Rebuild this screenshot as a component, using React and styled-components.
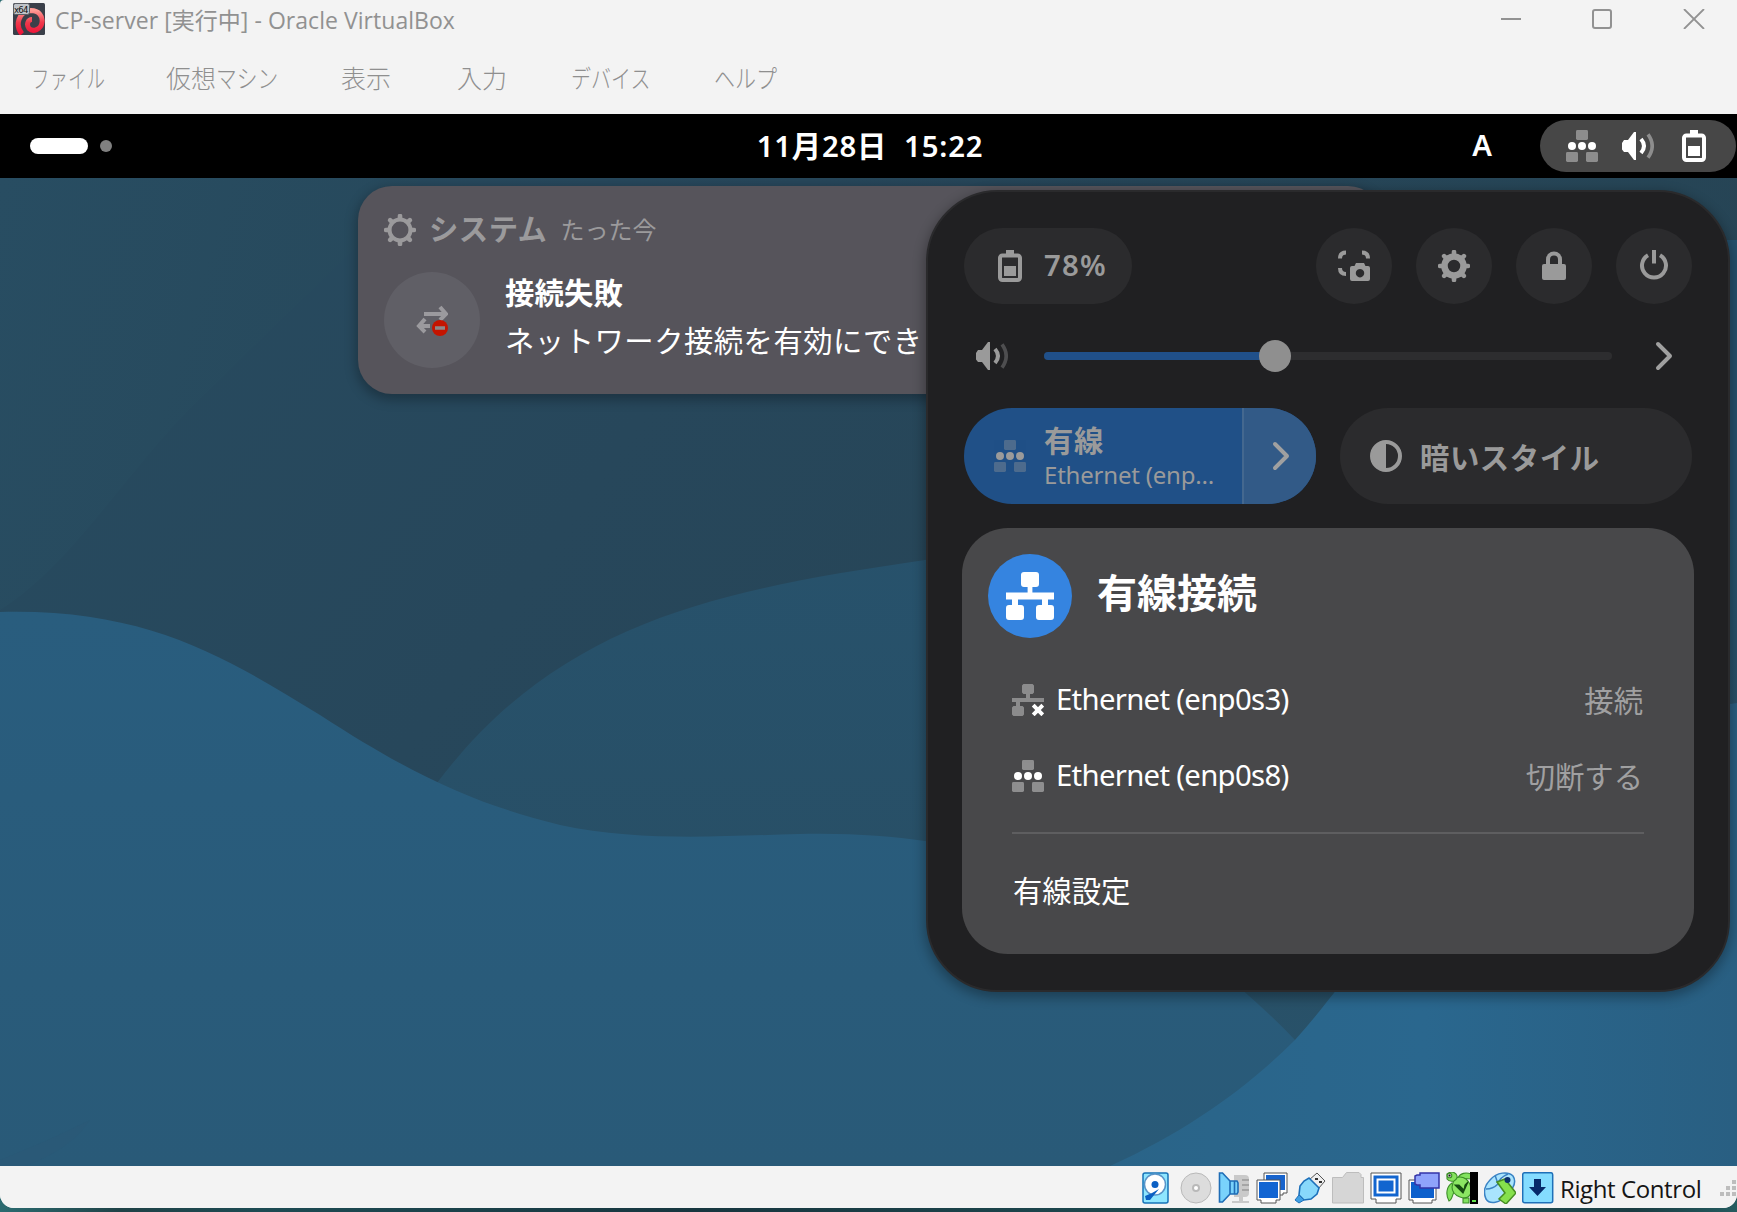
import React, { useState } from 'react';
import styled, { createGlobalStyle } from 'styled-components';

const GlobalStyle = createGlobalStyle`
  * {
    box-sizing: border-box;
  }
  body {
    margin: 0;
    overflow: hidden;
    background: #1d4a52;
    font-family: 'Noto Sans', 'Noto Sans CJK JP', sans-serif;
  }
  button {
    border: 0;
    padding: 0;
    background: none;
    color: inherit;
    font: inherit;
  }
  svg {
    display: block;
    flex: none;
  }
`;

const Backdrop = styled.div`
  width: 1737px;
  height: 1212px;
  background: linear-gradient(90deg, #2b6b70, #1f4247 7%, #1d4b53 15%, #17363f 40%, #1d4a50 68%, #246267 76%, #1a3c42 94%, #245b5f);
`;

const Window = styled.div`
  height: 1208px;
  display: flex;
  flex-direction: column;
  background: #f3f3f3;
  border-radius: 4px 0 14px 14px;
  overflow: hidden;
`;

const TitleBar = styled.div`
  height: 42px;
  padding: 3px 32px 0 13px;
  display: flex;
  align-items: flex-start;
`;

const Title = styled.div`
  margin-left: 10px;
  flex: 1;
  line-height: 34px;
  font-family: 'Open Sans', 'Noto Sans CJK JP', sans-serif;
  font-size: 23px;
  letter-spacing: 0.04px;
  color: #919191;
  white-space: nowrap;
`;

const WindowButtons = styled.div`
  display: flex;
  gap: 71px;
  padding-top: 6px;
`;

const MenuBar = styled.div`
  height: 72px;
  padding: 18px 0 0 31px;
  display: flex;
  line-height: 34px;
  font-family: 'Noto Sans CJK JP', sans-serif;
  font-size: 25px;
  font-weight: 300;
  color: #8f8f8f;
  white-space: nowrap;
`;

const MenuItem = styled.div`
  width: ${p => p.$width}px;
  flex: none;
`;

const Kana = styled.span`
  display: inline-block;
  transform: scaleX(${p => p.$scale || 0.78});
  transform-origin: left;
`;

const TopBar = styled.div`
  height: 64px;
  padding: 0 1px 0 30px;
  display: grid;
  grid-template-columns: 1fr auto 1fr;
  align-items: center;
  background: #000;
  color: #fff;
`;

const Workspaces = styled.div`
  display: flex;
  align-items: center;
  gap: 12px;
`;

const ActiveSpace = styled.div`
  width: 58px;
  height: 16px;
  border-radius: 8px;
  background: #fff;
`;

const IdleSpace = styled.div`
  width: 12px;
  height: 12px;
  border-radius: 50%;
  background: #808080;
`;

const Clock = styled.div`
  font-size: 29.33px;
  font-weight: 600;
  letter-spacing: 0.8px;
  white-space: pre;
  margin-right: 26px;
  padding-bottom: 3px;
`;

const TopBarRight = styled.div`
  display: flex;
  align-items: center;
  justify-content: flex-end;
  gap: 48px;
  font-size: 29.33px;
  font-weight: 600;
`;

const InputSource = styled.div`
  padding-bottom: 2px;
`;

const StatusPill = styled.div`
  width: 196px;
  height: 52px;
  padding-left: 26px;
  display: flex;
  align-items: center;
  gap: 24px;
  border-radius: 26px;
  background: #474747;
`;

const Desktop = styled.div`
  position: relative;
  height: 988px;
  flex: none;
  overflow: hidden;
`;

const Notification = styled.div`
  position: absolute;
  left: 358px;
  top: 8px;
  width: 1024px;
  height: 208px;
  padding: 22px 26px;
  border-radius: 34px;
  background: #56545b;
  box-shadow: 0 4px 12px 2px rgba(0, 0, 0, 0.28);
  color: #fff;
  white-space: nowrap;
`;

const NoteHeader = styled.div`
  display: flex;
  align-items: center;
  height: 44px;
  color: #9b9a9c;
`;

const NoteSource = styled.div`
  margin-left: 13px;
  padding-bottom: 5px;
  font-size: 29.33px;
  font-weight: 700;
  letter-spacing: 0.5px;
`;

const NoteTime = styled.div`
  margin-left: 13px;
  padding-bottom: 4px;
  font-size: 24px;
`;

const NoteBody = styled.div`
  display: flex;
  margin-top: 20px;
  gap: 25px;
`;

const NoteIcon = styled.div`
  width: 96px;
  height: 96px;
  display: flex;
  align-items: center;
  justify-content: center;
  border-radius: 50%;
  background: #605f66;
`;

const NoteText = styled.div`
  display: flex;
  flex-direction: column;
  margin-top: -3px;
  font-size: 29.33px;
  line-height: 48px;
  letter-spacing: 0.5px;
`;

const Strong = styled.div`
  font-weight: 700;
  letter-spacing: 0.2px;
`;

const QuickSettings = styled.div`
  position: absolute;
  left: 926px;
  top: 12px;
  width: 804px;
  height: 802px;
  padding: 36px;
  border: 2px solid #2a2a2c;
  border-radius: 72px;
  background: #202022;
  box-shadow: 0 4px 12px 2px rgba(0, 0, 0, 0.3);
  color: #9a9a9a;
  font-size: 29.33px;
  white-space: nowrap;
`;

const SystemRow = styled.div`
  display: flex;
  gap: 24px;
`;

const BatteryPill = styled.button`
  width: 168px;
  height: 76px;
  margin-right: auto;
  padding-left: 30px;
  display: flex;
  align-items: center;
  gap: 18px;
  border-radius: 38px;
  background: #2b2b2d;
  font-weight: 600;
`;

const BatteryLevel = styled.span`
  padding-bottom: 3px;
  letter-spacing: 1.2px;
`;

const RoundButton = styled.button`
  width: 76px;
  height: 76px;
  display: flex;
  align-items: center;
  justify-content: center;
  border-radius: 50%;
  background: #2b2b2d;
`;

const VolumeRow = styled.div`
  height: 104px;
  padding: 0 12px;
  display: flex;
  align-items: center;
`;

const Track = styled.div`
  width: 568px;
  height: 8px;
  margin: 0 42px 0 36px;
  display: flex;
  align-items: center;
  border-radius: 4px;
  background: #2d2d2f;
`;

const Fill = styled.div`
  height: 8px;
  border-radius: 4px 0 0 4px;
  background: #20508a;
`;

const Knob = styled.div`
  width: 32px;
  height: 32px;
  margin-left: -16px;
  border-radius: 50%;
  background: #8f8f8f;
`;

const Toggles = styled.div`
  display: grid;
  grid-template-columns: 352px 352px;
  gap: 24px;
`;

const Toggle = styled.div`
  height: 96px;
  display: flex;
  border-radius: 48px;
  overflow: hidden;
  background: ${p => (p.$active ? '#205087' : '#2b2b2d')};
`;

const ToggleMain = styled.div`
  flex: 1;
  padding-left: 30px;
  display: flex;
  align-items: center;
  gap: 18px;
  font-weight: 700;
`;

const ToggleLabel = styled.div`
  padding-top: 3px;
  line-height: 34px;
  letter-spacing: 0.6px;
`;

const ToggleSub = styled.div`
  font-size: 24px;
  font-weight: 400;
  letter-spacing: -0.2px;
  line-height: 34px;
`;

const ToggleArrow = styled.button`
  width: 74px;
  padding-left: 2px;
  display: flex;
  align-items: center;
  justify-content: center;
  border-left: 2px solid #44688f;
  background: #325a87;
`;

const Card = styled.div`
  height: 426px;
  margin: 24px -2px 0;
  padding: 26px 26px;
  border-radius: 46px;
  background: #48484a;
  color: #fff;
`;

const CardHeader = styled.div`
  display: flex;
  align-items: center;
  gap: 25px;
  margin-bottom: 24px;
`;

const CardIcon = styled.div`
  width: 84px;
  height: 84px;
  display: flex;
  align-items: center;
  justify-content: center;
  border-radius: 50%;
  background: #3584e0;
`;

const CardTitle = styled.div`
  margin-top: -6px;
  font-size: 40px;
  line-height: 60px;
  font-weight: 700;
`;

const DeviceRow = styled.div`
  height: 76px;
  padding: 0 25px 0 24px;
  display: flex;
  align-items: center;
  gap: 12px;
`;

const DeviceName = styled.div`
  padding-bottom: 3px;
  letter-spacing: -0.7px;
`;

const DeviceAction = styled.div`
  margin-left: auto;
  padding-bottom: 2px;
  color: #a0a0a1;
`;

const Divider = styled.div`
  height: 2px;
  margin: 18px 24px 19px;
  background: #5e5e60;
`;

const SettingsLink = styled.div`
  padding-left: 25px;
  line-height: 76px;
`;

const StatusBar = styled.div`
  height: 42px;
  padding-left: 1142px;
  display: flex;
  align-items: center;
  background: #f3f3f3;
`;

const StatusIcons = styled.div`
  display: flex;
  gap: 6px;
  padding-top: 1px;
`;

const HostKey = styled.div`
  width: 159px;
  margin-left: 6px;
  padding-top: 4px;
  font-family: 'Open Sans', sans-serif;
  font-size: 24px;
  letter-spacing: -0.4px;
  line-height: 40px;
  color: #151515;
  white-space: nowrap;
`;

const Grip = () => (
  <svg width="18" height="18" viewBox="0 -2 18 18" fill="#bdbdbd">
    <path d="M13 0h4v4h-4zM7 6h4v4H7zM13 6h4v4h-4zM1 12h4v4h-4zM7 12h4v4H7zM13 12h4v4h-4z" />
  </svg>
);

const AppIcon = () => (
  <svg width="32" height="32" viewBox="0 0 32 32">
    <defs>
      <linearGradient id="swirl" x1="0" y1="0" x2="0" y2="1">
        <stop offset="0" stopColor="#ff9a94" />
        <stop offset="0.5" stopColor="#f03a4c" />
        <stop offset="1" stopColor="#ee1238" />
      </linearGradient>
    </defs>
    <rect width="32" height="32" rx="1.5" fill="#3a3f49" />
    <path d="M9 31C2 23 5 8 18 7.500c8 0 12 6 11 12-1 7-9 10-13 6-3-4-1-9 3-9" fill="none" stroke="url(#swirl)" strokeWidth="5" />
    <rect x="0.5" y="0.5" width="16" height="11" rx="2" fill="#bfc3c8" stroke="#5a5d63" />
    <text x="1" y="9.5" fontSize="8.5" fontFamily="DejaVu Sans" fill="#111" textLength="14.5">x64</text>
  </svg>
);

const NetworkDots = ({ base = '#fff', dim = 0.38 }) => (
  <svg width="32" height="32" viewBox="0 0 16 16" fill={base}>
    <g opacity={dim}>
      <rect x="5" y="0" width="6" height="5" rx="0.7" />
      <rect x="0" y="11" width="6" height="5" rx="0.7" />
      <rect x="10" y="11" width="6" height="5" rx="0.7" />
    </g>
    <circle cx="3" cy="8" r="2" />
    <circle cx="8" cy="8" r="2" />
    <circle cx="13" cy="8" r="2" />
  </svg>
);

const NetworkWired = () => (
  <svg width="48" height="48" viewBox="0 0 16 16" fill="#fff">
    <path d="M6 0h4a1 1 0 0 1 1 1v3a1 1 0 0 1-1 1H8.8v1.8H16v2.4h-2V11h1a1 1 0 0 1 1 1v3a1 1 0 0 1-1 1h-4a1 1 0 0 1-1-1v-3a1 1 0 0 1 1-1h1V9.2H4V11h1a1 1 0 0 1 1 1v3a1 1 0 0 1-1 1H1a1 1 0 0 1-1-1v-3a1 1 0 0 1 1-1h1V9.2H0V6.8h7.2V5H6a1 1 0 0 1-1-1V1a1 1 0 0 1 1-1z" />
  </svg>
);

const NetworkOff = () => (
  <svg width="32" height="32" viewBox="0 0 16 16">
    <path fill="#8b8b8c" d="M5.7 0h4.6l.7.7v3.6l-.7.7H9v2h7v2H4v2h1.3l.7.7v3.6l-.7.7H.7l-.7-.7v-3.6l.7-.7H2V9H0V7h7V5H5.7L5 4.3V.7z" />
    <path stroke="#fff" strokeWidth="2" d="m10.6 10.6 4.8 4.8m0-4.8-4.8 4.8" />
  </svg>
);

const Volume = ({ color = '#fff' }) => (
  <svg width="32" height="32" viewBox="0 0 16 16" fill="none" stroke={color}>
    <path d="M0 6.5 1 5h2l3-4h1v14H6l-3-4H1L0 9.7z" fill={color} stroke="none" />
    <path d="M9.5 4.5q3 3.5 0 7" strokeWidth="2" />
    <path d="M13 2.2q4.2 5.8 0 11.6" strokeWidth="1.8" opacity="0.38" />
  </svg>
);

const Battery = ({ color = '#fff' }) => (
  <svg width="32" height="32" viewBox="0 0 16 16" fill={color}>
    <path d="M6 0h4v2H6z" />
    <rect x="3" y="2.7" width="10" height="12.3" rx="1.2" fill="none" stroke={color} strokeWidth="2" />
    <path d="M5 8h6v5H5z" />
  </svg>
);

// the hub is a ring, teeth are short strokes turned around it
const Gear = ({ hub, width, color = '#9a9a9a' }) => (
  <svg width="32" height="32" viewBox="0 0 32 32" fill="none" stroke={color}>
    <circle cx="16" cy="16" r={hub} strokeWidth={width} />
    {[0, 45, 90, 135, 180, 225, 270, 315].map(a => (
      <path key={a} d="M16 5V2" strokeWidth="4.600" strokeLinecap="round" transform={`rotate(${a} 16 16)`} />
    ))}
  </svg>
);

const Chevron = () => (
  <svg width="20" height="32" viewBox="0 0 20 32" fill="none" stroke="#a0a0a0" strokeWidth="4">
    <path d="m4 4 12 12L4 28" strokeLinecap="round" strokeLinejoin="round" />
  </svg>
);

const Screenshot = () => (
  <svg width="32" height="32" viewBox="0 0 32 32" fill="none" stroke="#9a9a9a" strokeWidth="4">
    <path d="M2 8.5Q2 2.5 8 2.5M24 2.5q6 0 6 6M2 18q0 6 6 6" />
    <path fillRule="evenodd" fill="#9a9a9a" stroke="none" d="M18 13h8l1.5 3H30q2 0 2 2v11q0 2-2 2H14q-2 0-2-2V18q0-2 2-2h2.500zM22 19a4.200 4.200 0 1 0 .01 0z" />
  </svg>
);

const Lock = () => (
  <svg width="32" height="32" viewBox="0 0 32 32" fill="#9a9a9a">
    <path d="M10 16V9.500a6 6 0 0 1 12 0V16" fill="none" stroke="#9a9a9a" strokeWidth="4" />
    <path d="M6 14h20q2 0 2 2v12q0 2-2 2H6q-2 0-2-2V16q0-2 2-2z" />
  </svg>
);

const Power = () => (
  <svg width="32" height="32" viewBox="0 0 32 32" fill="none" stroke="#9a9a9a" strokeWidth="4">
    <path d="M10 5.200a12 12 0 1 0 12 0M16 0v13.500" />
  </svg>
);

const HalfMoon = () => (
  <svg width="32" height="32" viewBox="0 0 32 32">
    <circle cx="16" cy="16" r="14" fill="none" stroke="#9a9a9a" strokeWidth="4" />
    <path d="M16 2a14 14 0 0 0 0 28z" fill="#9a9a9a" />
  </svg>
);

const TransferError = () => (
  <svg width="32" height="32" viewBox="0 0 32 32" fill="none" stroke="#9b9a9e" strokeWidth="4">
    <path d="M8 10h20M24 3l6 7-6 6M14 22H3M9 15l-6 7 6 6" />
    <circle cx="24" cy="24" r="8" fill="#c41400" stroke="none" />
    <path d="M19 24h10" stroke="#8d8788" strokeWidth="3.500" />
  </svg>
);

const Wallpaper = () => (
  <svg width="1737" height="988" viewBox="0 178 1737 988">
    <defs>
      <linearGradient id="sky" x1="0" y1="0" x2="1" y2="0.4">
        <stop offset="0" stopColor="#274b60" />
        <stop offset="0.4" stopColor="#27475b" />
        <stop offset="1" stopColor="#264454" />
      </linearGradient>
      <linearGradient id="skyLeft" x1="0" y1="0" x2="1" y2="0.3">
        <stop offset="0" stopColor="#284d62" />
        <stop offset="1" stopColor="#27495c" />
      </linearGradient>
      <linearGradient id="hill" x1="0" y1="0" x2="0" y2="1">
        <stop offset="0" stopColor="#27526c" />
        <stop offset="0.6" stopColor="#284f66" />
        <stop offset="1" stopColor="#29546c" />
      </linearGradient>
      <linearGradient id="sea" x1="0" y1="0" x2="0" y2="1">
        <stop offset="0" stopColor="#295d7e" />
        <stop offset="1" stopColor="#295a78" />
      </linearGradient>
      <linearGradient id="bay" x1="0" y1="0" x2="1" y2="0">
        <stop offset="0" stopColor="#2a6488" />
        <stop offset="0.5" stopColor="#2a678e" />
        <stop offset="1" stopColor="#295f82" />
      </linearGradient>
    </defs>
    <rect y="178" width="1737" height="988" fill="url(#sky)" />
    <path d="M0 610C80 560 130 460 220 380C330 270 390 220 420 178H0z" fill="url(#skyLeft)" />
    <path d="M1500 240h237v470h-237z" fill="#24506c" />
    <path d="M437 783C560 620 720 590 925 560C1200 520 1500 500 1737 520V1166H437z" fill="url(#hill)" />
    <path d="M0 612C150 608 230 660 320 715C420 780 480 805 560 825C640 842 720 836 800 834C850 833 890 836 925 841C1060 860 1190 930 1295 1040L1280 1166H0z" fill="url(#sea)" />
    <path d="M0 1166V1160Q50 1140 90 1120Q70 1150 25 1166z" fill="#2a5977" />
    <path d="M1110 1166C1190 1130 1250 1085 1295 1040C1340 990 1370 940 1430 880C1540 765 1640 715 1737 703V1166z" fill="url(#bay)" />
  </svg>
);

// 32px indicators of the VirtualBox status bar
const statusIcons = [
  <g key="hd" strokeWidth="1.500">
    <rect x="1" y="1" width="25" height="30" rx="2" fill="#8fe6ff" stroke="#1773b8" />
    <circle cx="13" cy="12.500" r="10.500" fill="#fff" stroke="#5a94c8" />
    <circle cx="13" cy="12.500" r="3.500" fill="#0b60c4" />
    <path d="M17 17 8 28H4l-1-4 7-3z" fill="#0b60c4" />
  </g>,
  <g key="cd" stroke="#b9b9b9">
    <circle cx="16" cy="16" r="15" fill="#dcdcdc" />
    <circle cx="16" cy="16" r="3" fill="#fff" strokeWidth="2" />
  </g>,
  <g key="audio">
    <path d="M16 3h11q4 0 4 4v14q0 4-4 4H16zM21 25h4v4h6v2H14v-2h7z" fill="#c9c9c9" />
    <path d="M24 8h7M24 13h7M24 18h7" stroke="#999" strokeWidth="1.500" />
    <path d="M1.500 1h3L12 9h7l1 2v9l-1 2h-7L4.500 30h-3zM12 9v13M16.500 9v13" fill="#79d2fb" stroke="#1f6db6" strokeWidth="1.600" />
  </g>,
  <g key="net" stroke="#555">
    <path d="M8 1h23v20h-4v2H12v-2H8z" fill="#fff" />
    <path d="M10 3h19v15H10z" fill="#1763cc" stroke="none" />
    <path d="M1 8h23v20h-4v3H5v-3H1z" fill="#fff" />
    <path d="M3 10h19v16H3z" fill="#1265d2" stroke="none" />
  </g>,
  <g key="usb">
    <path d="m23 1 8 8-7 8-9-9z" fill="#eee" stroke="#555" />
    <path d="M21 6h3v2h-3zM25 9h3v2h-3z" fill="#333" />
    <path d="m15 6 10 10-2 6-6 5-7 1-5-5 1-9 4-5z" fill="#88d8fb" stroke="#1d70ba" strokeWidth="1.600" />
    <path d="m5 23 5 5-5 3-4-3z" fill="#3f9fe2" stroke="#1d70ba" />
  </g>,
  <g key="folder" fill="#d6d6d6" stroke="#bdbdbd">
    <path d="M.5 5.500h10l4-5h12.500l2 2v3h2.500v25.500H.5z" />
  </g>,
  <g key="display" stroke="#555">
    <path d="M1 1h30v26h-5v4H6v-4H1z" fill="#fff" />
    <path d="M3.500 3.500h25v21h-25z" fill="#1265cf" stroke="none" />
    <path d="M7.500 7.500h17v13h-17z" fill="none" stroke="#fff" strokeWidth="2" />
  </g>,
  <g key="rec">
    <path d="M1 8h27v20h-4v3H5v-3H1z" fill="#fff" stroke="#555" />
    <path d="M3 10h23v16H3z" fill="#0d60cc" />
    <path d="M12 1h19v15H12v-3H9l-2-1V4l2-1h3z" fill="#8fa3fb" stroke="#3535a8" strokeWidth="1.500" />
  </g>,
  <g key="vm" stroke="#3c8d28" strokeWidth="1.100">
    <path d="M12 6C14 1 20 0 25 2v5zM6 11C1 14-1 22 3 29c3-1 3-5 5-9zM17 26v5h6v-5z" fill="#82e25e" />
    <path d="M8 7q6-4 12 0 6 5 5 14-3 7-11 4Q6 22 6 15z" fill="#8be663" />
    <path d="m9 13 8 8 5-11-3 3-1 5-5-5z" fill="#174d12" stroke="#174d12" />
    <path d="M1 2q5-4 9 0 3 4-2 7Q3 10 1 7z" fill="#86e25e" />
    <circle cx="3.500" cy="3.500" r="2.300" fill="#fff" />
    <path d="M3 3h1v1H3z" stroke="#111" />
    <path d="M24 0h8v32h-8z" fill="#000" stroke="none" />
    <path d="M26 28h4v2h-4z" fill="#61e34b" stroke="none" />
  </g>,
  <g key="mouse" strokeWidth="1.500">
    <path d="M6 8C13 0 24-1 29 4c4 6 1 12-6 19C16 31 6 33 2 27-1 20 1 13 6 8zM11 3l3 9q-5 5-12 5M24 2q-9 4-10 10" fill="#a9e4fd" stroke="#3a83c4" />
    <path d="m13 10 8-3 11 14-10 11-7-5 6-6z" fill="#86e04c" stroke="#478d24" />
    <circle cx="23.500" cy="8" r="3" fill="#0b2f6b" />
  </g>,
  <g key="host">
    <rect x="0.700" y="0.700" width="30" height="30" rx="2" fill="#84dcff" stroke="#1f70b8" strokeWidth="1.500" />
    <path d="M12 7h7v8h5l-8.500 9L7 15h5z" fill="#06296a" />
  </g>,
];

const App = () => {
  const [volume] = useState(40.6);

  return (
    <>
      <GlobalStyle />
      <Backdrop>
        <Window>
          <TitleBar>
            <AppIcon />
            <Title>CP-server [実行中] - Oracle VirtualBox</Title>
            <WindowButtons>
              <svg width="20" height="20" stroke="#929292" strokeWidth="2"><path d="M0 10h20" /></svg>
              <svg width="20" height="20" stroke="#929292" strokeWidth="2" fill="none"><rect x="1" y="1" width="18" height="18" rx="2" /></svg>
              <svg width="22" height="20" stroke="#929292" strokeWidth="1.800"><path d="m1 0 20 20M21 0 1 20" /></svg>
            </WindowButtons>
          </TitleBar>
          <MenuBar>
            <MenuItem $width={135}><Kana $scale={0.74}>ファイル</Kana></MenuItem>
            <MenuItem $width={175}>仮想<Kana $scale={0.83}>マシン</Kana></MenuItem>
            <MenuItem $width={116}>表示</MenuItem>
            <MenuItem $width={114}>入力</MenuItem>
            <MenuItem $width={143}><Kana $scale={0.8}>デバイス</Kana></MenuItem>
            <MenuItem $width={80}><Kana $scale={0.84}>ヘルプ</Kana></MenuItem>
          </MenuBar>

          <TopBar>
            <Workspaces>
              <ActiveSpace />
              <IdleSpace />
            </Workspaces>
            <Clock>11月28日  15:22</Clock>
            <TopBarRight>
              <InputSource>A</InputSource>
              <StatusPill>
                <NetworkDots />
                <Volume />
                <Battery />
              </StatusPill>
            </TopBarRight>
          </TopBar>

          <Desktop>
            <Wallpaper />
            <Notification>
              <NoteHeader>
                <Gear hub={10.5} width={4} color="#9b9a9c" />
                <NoteSource>システム</NoteSource>
                <NoteTime>たった今</NoteTime>
              </NoteHeader>
              <NoteBody>
                <NoteIcon><TransferError /></NoteIcon>
                <NoteText>
                  <Strong>接続失敗</Strong>
                  <div>ネットワーク接続を有効にでき</div>
                </NoteText>
              </NoteBody>
            </Notification>

            <QuickSettings>
              <SystemRow>
                <BatteryPill>
                  <Battery color="#9a9a9a" />
                  <BatteryLevel>78%</BatteryLevel>
                </BatteryPill>
                <RoundButton><Screenshot /></RoundButton>
                <RoundButton><Gear hub={9.5} width={6.5} /></RoundButton>
                <RoundButton><Lock /></RoundButton>
                <RoundButton><Power /></RoundButton>
              </SystemRow>
              <VolumeRow>
                <Volume color="#9a9a9a" />
                <Track>
                  <Fill style={{ width: `${volume}%` }} />
                  <Knob />
                </Track>
                <Chevron />
              </VolumeRow>
              <Toggles>
                <Toggle $active>
                  <ToggleMain>
                    <NetworkDots base="#9a9a9a" />
                    <div>
                      <ToggleLabel>有線</ToggleLabel>
                      <ToggleSub>Ethernet (enp…</ToggleSub>
                    </div>
                  </ToggleMain>
                  <ToggleArrow><Chevron /></ToggleArrow>
                </Toggle>
                <Toggle>
                  <ToggleMain>
                    <HalfMoon />
                    <ToggleLabel>暗いスタイル</ToggleLabel>
                  </ToggleMain>
                </Toggle>
              </Toggles>
              <Card>
                <CardHeader>
                  <CardIcon><NetworkWired /></CardIcon>
                  <CardTitle>有線接続</CardTitle>
                </CardHeader>
                <DeviceRow>
                  <NetworkOff />
                  <DeviceName>Ethernet (enp0s3)</DeviceName>
                  <DeviceAction>接続</DeviceAction>
                </DeviceRow>
                <DeviceRow>
                  <NetworkDots />
                  <DeviceName>Ethernet (enp0s8)</DeviceName>
                  <DeviceAction>切断する</DeviceAction>
                </DeviceRow>
                <Divider />
                <SettingsLink>有線設定</SettingsLink>
              </Card>
            </QuickSettings>
          </Desktop>

          <StatusBar>
            <StatusIcons>
              {statusIcons.map(icon => (
                <svg key={icon.key} width="32" height="32" viewBox="0 0 32 32">{icon}</svg>
              ))}
            </StatusIcons>
            <HostKey>Right Control</HostKey>
            <Grip />
          </StatusBar>
        </Window>
      </Backdrop>
    </>
  );
};

export default App;
